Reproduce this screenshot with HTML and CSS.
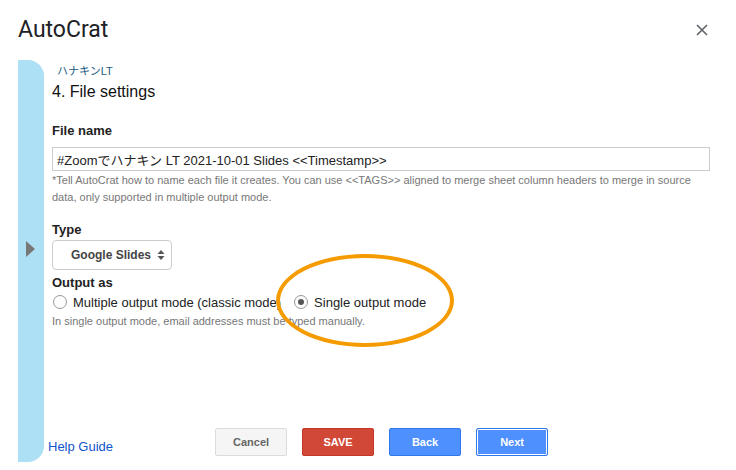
FILE: index.html
```html
<!DOCTYPE html>
<html lang="en">
<head>
    <meta charset="UTF-8">
    <meta name="viewport" content="width=device-width, initial-scale=1.0">
    <title>AutoCrat</title>
    <link rel="stylesheet" href="styles.css">
</head>
<body>
    <header class="top">
        <h1>AutoCrat</h1>
        <button class="close" aria-label="Close">
            <svg width="12" height="12" viewBox="0 0 12 12"><path d="M1 1L11 11M11 1L1 11" stroke="#5f6368" stroke-width="1.6"/></svg>
        </button>
    </header>

    <div class="frame">
        <div class="sidebar">
            <span class="arrow"></span>
        </div>

        <div class="main">
            <div class="content">
                <div class="job">ハナキンLT</div>
                <h2>4. File settings</h2>

                <label class="field-label">File name</label>
                <input class="text-input" type="text" value="#Zoomでハナキン LT 2021-10-01 Slides <<Timestamp>>">
                <p class="hint">*Tell AutoCrat how to name each file it creates. You can use &lt;&lt;TAGS&gt;&gt; aligned to merge sheet column headers to merge in source data, only supported in multiple output mode.</p>

                <label class="field-label type-label">Type</label>
                <div class="select">
                    <span>Google Slides</span>
                    <svg width="8" height="12" viewBox="0 0 8 12"><path d="M4 1L7.5 5H0.5Z M4 11L7.5 7H0.5Z" fill="#555"/></svg>
                </div>

                <label class="field-label output-label">Output as</label>
                <div class="radios">
                    <label class="radio"><span class="dot"></span>Multiple output mode (classic mode)</label>
                    <label class="radio"><span class="dot on"></span>Single output mode</label>
                </div>
                <p class="hint">In single output mode, email addresses must be typed manually.</p>

                <!-- annotation drawn over the form -->
                <div class="circle"></div>
            </div>

            <div class="footer">
                <a class="help" href="#">Help Guide</a>
                <div class="buttons">
                    <button class="btn cancel">Cancel</button>
                    <button class="btn save">SAVE</button>
                    <button class="btn blue">Back</button>
                    <button class="btn blue focus">Next</button>
                </div>
            </div>
        </div>
    </div>
</body>
</html>
```

FILE: styles.css
```css
body {
    margin: 0;
    width: 736px;
    height: 470px;
    background: #fff;
    font-family: "Liberation Sans", Arial, "Noto Sans CJK JP", sans-serif;
    color: #222;
    overflow: hidden;
}

.top {
    height: 60px;
    display: flex;
    align-items: center;
    justify-content: space-between;
    padding: 0 28px 0 18px;
}

.top h1 {
    margin: 0;
    font-family: Roboto, "Open Sans", sans-serif;
    font-weight: 400;
    font-size: 23px;
    color: #202124;
    padding-bottom: 1px;
}

.close {
    border: none;
    background: none;
    padding: 0;
    width: 12px;
    height: 12px;
    cursor: pointer;
}

.frame {
    display: flex;
    height: 402px;
    padding-left: 18px;
}

.sidebar {
    width: 26px;
    flex: none;
    background: #ade0f4;
    border-radius: 0 16px 16px 0;
    padding-top: 181px;
    box-sizing: border-box;
}

.arrow {
    display: block;
    margin-left: 8px;
    width: 0;
    height: 0;
    border-top: 8px solid transparent;
    border-bottom: 8px solid transparent;
    border-left: 9px solid #777;
}

.main {
    flex: 1;
    display: flex;
    flex-direction: column;
}

.content {
    position: relative;
    flex: 1;
    padding: 4px 26px 0 8px;
}

.job {
    font-family: "Liberation Sans", "Noto Sans CJK JP", sans-serif;
    font-size: 11px;
    line-height: 14px;
    color: #1c5b85;
    padding-left: 5px;
}

h2 {
    margin: 4px 0 0;
    font-size: 16px;
    line-height: 20px;
    font-weight: 400;
    color: #111;
}

.field-label {
    display: block;
    margin-top: 21px;
    font-size: 13px;
    line-height: 16px;
    font-weight: bold;
    color: #222;
}

.type-label {
    margin-top: 16px;
}

.output-label {
    margin-top: 5px;
}

.text-input {
    display: block;
    box-sizing: border-box;
    width: 100%;
    height: 24px;
    margin-top: 8px;
    padding: 0 4px;
    border: 1px solid #ccc;
    border-radius: 0;
    font-family: "Liberation Sans", "Noto Sans CJK JP", sans-serif;
    font-size: 13px;
    color: #222;
}

.hint {
    margin: 1px 0 0;
    font-size: 11px;
    line-height: 17px;
    color: #777;
}

.select {
    box-sizing: border-box;
    width: 120px;
    height: 30px;
    margin-top: 2px;
    border: 1px solid #ccc;
    border-radius: 4px;
    display: flex;
    align-items: center;
    justify-content: flex-end;
    gap: 6px;
    padding-right: 6px;
    font-size: 12px;
    font-weight: bold;
    color: #444;
}

.radios {
    display: flex;
    gap: 12px;
    height: 20px;
    align-items: center;
    margin-top: 1px;
}

.radio {
    display: flex;
    align-items: center;
    font-size: 13px;
    color: #222;
}

.dot {
    box-sizing: border-box;
    width: 14px;
    height: 14px;
    border: 1px solid #999;
    border-radius: 50%;
    background: #fdfdfd;
    margin: 0 6px 0 1px;
    display: flex;
    align-items: center;
    justify-content: center;
}

.dot.on::after {
    content: "";
    width: 6px;
    height: 6px;
    border-radius: 50%;
    background: #555;
}

.circle {
    position: absolute;
    left: 232px;
    top: 194px;
    width: 170px;
    height: 85px;
    border: 4px solid #f59b00;
    border-radius: 50%;
}

.footer {
    height: 44px;
    display: flex;
    align-items: flex-start;
    padding-left: 4px;
}

.help {
    margin-top: 21px;
    font-size: 13px;
    color: #1155cc;
    text-decoration: none;
}

.buttons {
    display: flex;
    gap: 15px;
    margin-left: 102px;
    margin-top: 10px;
}

.btn {
    width: 72px;
    height: 28px;
    border-radius: 2px;
    font-family: "Liberation Sans", Arial, sans-serif;
    font-size: 11px;
    font-weight: bold;
    cursor: pointer;
}

.cancel {
    background: #f5f5f5;
    border: 1px solid #dcdcdc;
    color: #666;
}

.save {
    background: #d14836;
    border: 1px solid #c53727;
    color: #fff;
}

.blue {
    background: #4d90fe;
    border: 1px solid #3079ed;
    color: #fff;
}

.focus {
    box-shadow: inset 0 0 0 1px #fff;
}
```
